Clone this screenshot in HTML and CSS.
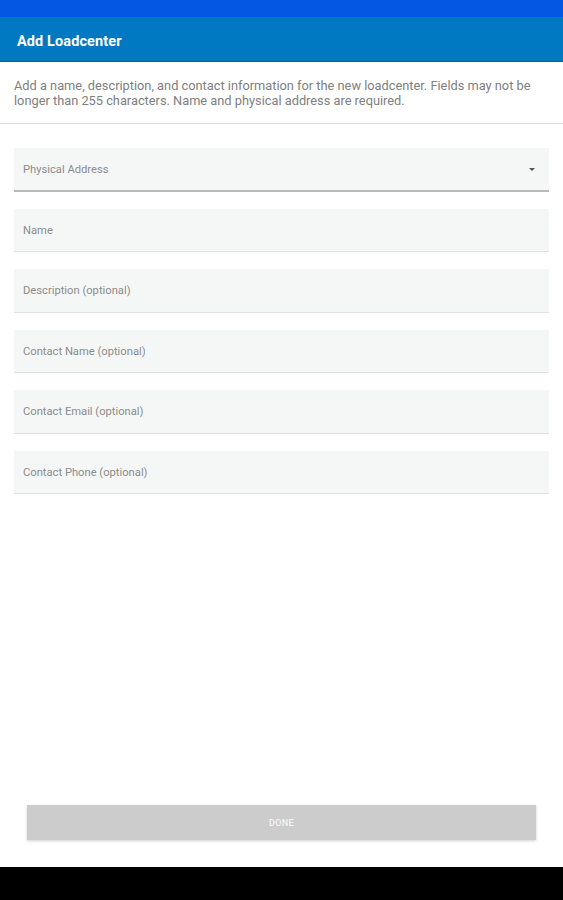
FILE: index.html
```html
<!DOCTYPE html>
<html lang="en">
<head>
<meta charset="utf-8">
<title>Add Loadcenter</title>
<link rel="stylesheet" href="styles.css">
</head>
<body>
<div class="screen">
  <div class="status-bar"></div>
  <header class="toolbar">
    <h1 class="toolbar-title">Add Loadcenter</h1>
  </header>
  <main class="content">
    <p class="intro">Add a name, description, and contact information for the new loadcenter. Fields may not be longer than 255 characters. Name and physical address are required.</p>
    <form class="form">
      <div class="field field-select">
        <span class="field-label">Physical Address</span>
        <span class="select-arrow"></span>
      </div>
      <div class="field"><span class="field-label">Name</span></div>
      <div class="field"><span class="field-label">Description (optional)</span></div>
      <div class="field"><span class="field-label">Contact Name (optional)</span></div>
      <div class="field"><span class="field-label">Contact Email (optional)</span></div>
      <div class="field"><span class="field-label">Contact Phone (optional)</span></div>
    </form>
    <div class="actions">
      <button class="done-btn" type="button" disabled>DONE</button>
    </div>
  </main>
  <div class="nav-bar"></div>
</div>
</body>
</html>
```

FILE: styles.css
```css
* { box-sizing: border-box; }
html, body { margin: 0; padding: 0; }
body {
  font-family: Roboto, "Noto Sans", "Liberation Sans", sans-serif;
  background: #ffffff;
}
.screen {
  width: 563px;
  height: 900px;
  display: flex;
  flex-direction: column;
  overflow: hidden;
}
.status-bar {
  height: 17px;
  background: #0457e2;
  flex: none;
}
.toolbar {
  height: 45px;
  background: #0079c2;
  border-bottom: 1px solid #0067a8;
  display: flex;
  align-items: center;
  padding: 4px 17px 0;
  flex: none;
}
.toolbar-title {
  margin: 0;
  font-size: 14.5px;
  font-weight: 700;
  color: #ffffff;
  letter-spacing: 0.1px;
}
.content {
  flex: 1;
  display: flex;
  flex-direction: column;
}
.intro {
  margin: 0;
  padding: 16px 14px 15px 14px;
  font-size: 12.8px;
  line-height: 15px;
  color: #808080;
  border-bottom: 1px solid #dcdcdc;
}
.form {
  display: flex;
  flex-direction: column;
  gap: 17px;
  padding: 24px 14px 0;
}
.field {
  height: 43.5px;
  background: #f5f7f7;
  border-bottom: 1px solid #e0e0e0;
  display: flex;
  align-items: center;
  justify-content: space-between;
  padding: 1px 14px 0 9px;
}
.field-select {
  border-bottom: 2px solid #b9b9b9;
}
.field-label {
  font-size: 11.2px;
  color: #8c8c8c;
}
.select-arrow {
  width: 0;
  height: 0;
  border-left: 3px solid transparent;
  border-right: 3px solid transparent;
  border-top: 3px solid #555555;
}
.actions {
  margin-top: auto;
  padding: 0 27px 27px;
}
.done-btn {
  width: 100%;
  height: 35px;
  border: none;
  background: #cccccc;
  color: #f4f4f4;
  font-family: Roboto, "Noto Sans", sans-serif;
  font-size: 9px;
  font-weight: 500;
  letter-spacing: 0.4px;
  box-shadow: 0 1px 3px rgba(0,0,0,0.18);
  display: block;
}
.nav-bar {
  height: 33px;
  background: #000000;
  flex: none;
}
```
